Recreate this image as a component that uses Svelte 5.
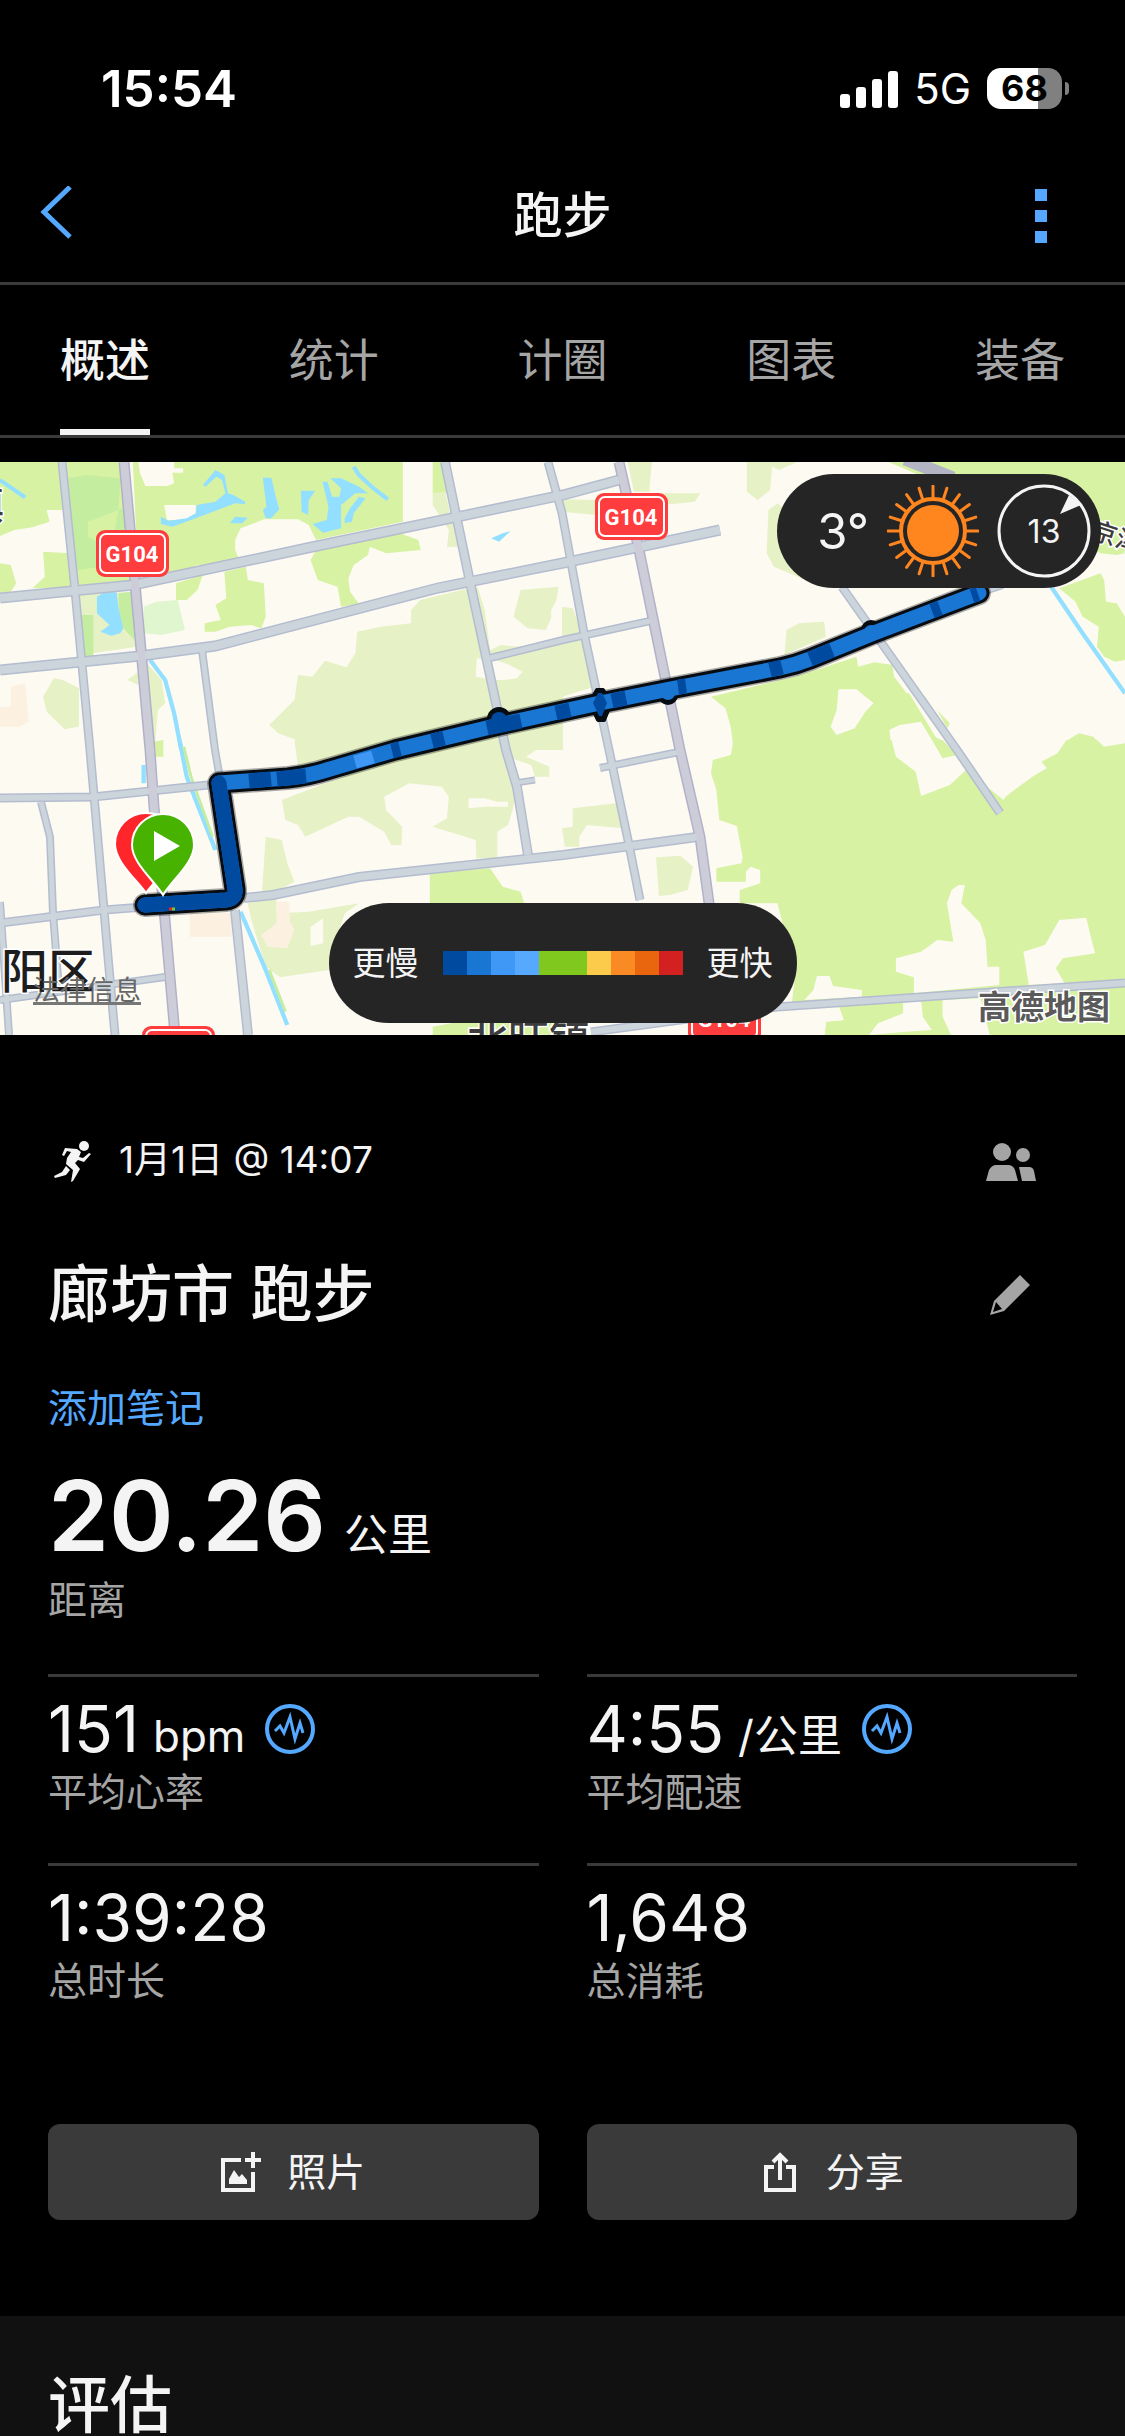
<script>
  const tabs = ['概述', '统计', '计圈', '图表', '装备'];
  let active = $state('概述');

  const paceColors = ['#004ba0', '#1976d2', '#3f98f5', '#56a9ff', '#80c81d', '#80c81d', '#fccb4b', '#fa8b24', '#ea660e', '#d32020'];

  const stats = [
    { value: '151', unit: 'bpm', label: '平均心率', chart: true },
    { value: '4:55', unit: '/公里', label: '平均配速', chart: true },
    { value: '1:39:28', unit: '', label: '总时长', chart: false },
    { value: '1,648', unit: '', label: '总消耗', chart: false }
  ];

  const rays = Array.from({ length: 20 }, (_, i) => i * 18);

  const roads = [
    { w: 10, d: 'M0 136L133 123L312 85L563 33L619 18' },
    { w: 10, d: 'M0 208L140 194L215 184L438 126L563 101L720 68' },
    { w: 7, d: 'M490 196L563 178L650 159' },
    { w: 8, d: 'M62 0L75 128L90 288L95 345L104 448L108 495L115 573' },
    { w: 7, d: 'M202 188L215 288L219 311' },
    { w: 9, d: 'M235 448L248 573' },
    { w: 9, d: 'M445 0L470 120L506 288L517 325L528 393' },
    { w: 8, d: 'M548 0L562 51L584 171L609 288L628 378L640 438' },
    { w: 8, d: 'M0 336L93 335L208 323' },
    { w: 7, d: 'M41 340L50 375L53 451L59 528' },
    { w: 8, d: 'M0 461L104 448L144 445' },
    { w: 9, d: 'M244 436L273 433L359 415L563 393L697 375' },
    { w: 7, d: 'M0 538L165 515' },
    { w: 7, d: 'M0 440L9 573' },
    { w: 6, d: 'M515 321L535 318' },
    { w: 7, d: 'M600 306L679 290' },
    { w: 8, d: 'M842 125L957 288L1000 351' },
    { w: 8, d: 'M591 570L777 545L1125 521' },
    { w: 5, d: 'M985 130L1003 124' }
  ];
  const highways = ['M124 0L135 121L150 288L154 345L165 458L175 573', 'M619 0L639 88L680 288L700 375L709 441L718 573'];
  const shields = [[96, 68], [595, 31], [142, 564], [688, 533]];

  const route = 'M145 443L226 438Q236 437 235 427L219 321L288 316Q308 314 330 307L395 288L499 263L563 249L600 241L670 227L780 206Q795 203 810 197L874 171L979 131';
</script>

<div class="page">
  <div class="status">
    <span class="time">15:54</span>
    <div class="signals">
      <svg class="bars" viewBox="0 0 58 38" aria-hidden="true">
        <rect x="0" y="24" width="10" height="14" rx="3" />
        <rect x="16" y="17" width="10" height="21" rx="3" />
        <rect x="32" y="9" width="10" height="29" rx="3" />
        <rect x="48" y="1" width="10" height="37" rx="3" />
      </svg>
      <span class="network">5G</span>
      <div class="battery"><span class="level">68</span><span class="tip"></span></div>
    </div>
  </div>

  <header class="nav">
    <button class="icon-button" aria-label="返回">
      <svg width="34" height="60" viewBox="0 0 34 60"><path d="M30 1L4 26L30 51" fill="none" stroke="#54a8ff" stroke-width="5" /></svg>
    </button>
    <h1>跑步</h1>
    <button class="icon-button more" aria-label="更多">
      <svg width="12" height="54" viewBox="0 0 12 54" fill="#54a8ff"><path d="M0 0h12v12H0zM0 21h12v12H0zM0 42h12v12H0z" /></svg>
    </button>
  </header>

  <nav class="tabs">
    {#each tabs as tab}
      <button class:active={active === tab} onclick={() => (active = tab)}>{tab}</button>
    {/each}
  </nav>

  <section class="map" aria-label="路线地图">
    <svg class="canvas" viewBox="0 0 1125 573" preserveAspectRatio="xMidYMid slice">
      <rect width="1125" height="573" fill="#fdfaf2" />

      <!-- north-west land cover -->
      <g transform="translate(0 -12) scale(.35906 .33333)">
        <path class="green" d="M0 36H165L175 180H130L138 215L90 232L40 240L0 258ZM0 340L30 345L45 400L30 425L0 430ZM120 305L195 310L203 412L90 415L125 380ZM185 36H350L380 405L215 410ZM370 36H1122V215L880 270L860 225L830 208H735L670 235L655 270V300L665 325L685 340L570 350L550 345L500 370L385 385ZM490 400L565 375L550 420L520 450H490ZM625 365L685 350L690 390L735 400L740 500L728 535L700 525L640 530L600 545H570V520L615 510L600 465L630 445ZM865 330L880 300L1115 250L1165 270L1172 300L1075 310L1030 290L1025 315L985 345L970 385L975 425L1000 462L950 470L940 410L885 390ZM1205 36H1240L1275 190L1248 130H1205Z" />
        <path class="pale" d="M215 435L370 425L380 590L225 615ZM1205 130L1240 125L1275 290L1245 292L1250 240L1205 165ZM750 825L820 750L830 675L870 680L905 632L965 652L990 610L995 545L1060 530L1145 520V480L1170 450L1305 415L1330 410L1350 480L1365 600L1395 585L1440 590L1568 570V900H830L825 870L775 850ZM1430 500L1450 420L1555 410L1550 450L1535 480V505L1520 540L1470 535ZM120 740L150 685L175 690L220 715V830L180 838L130 785ZM410 640L450 690L460 760L440 780L430 900H410ZM355 690L385 665V705Z" />
        <path class="park" d="M190 85L240 75L335 85L330 180L245 215V260L300 290L290 350L210 360ZM330 180L350 170L360 240L320 240ZM330 430L370 425L375 570L330 520ZM220 495H260V620H228Z" />
        <path fill="#dff6cf" d="M400 470L435 455L495 450L515 540L450 555L400 550Z" />
        <path class="peach" d="M0 770H30V710L70 700L80 815L55 830H0Z" />
        <path class="blank" d="M385 36H485V55H510V68H480L485 100L465 108H405L390 70ZM457 165H545V190L520 210H465ZM1328 625L1380 630L1420 645L1455 665L1440 685L1405 690H1375L1325 680Z" />
        <path class="water" d="M565 105L600 60L625 75L635 130L650 135L683 155V163L655 160L545 205L480 230L448 222V200L470 212L520 205L545 190L548 165L600 155L628 130L618 90L603 80L572 110ZM732 83H756L768 140L778 178L755 205H740L732 180L742 170ZM838 122H878L860 150L858 195L840 185ZM898 95H912L925 140H945L950 115L920 85H950L1000 110L1025 130L990 130L950 165V235L900 248L870 222L910 210L915 170ZM1000 140L1018 145L985 190L980 215L960 220V205L975 175ZM640 220L655 200L690 203L675 220ZM270 440L290 427H325L330 475L343 535L335 550L310 557L280 545L305 525L270 490ZM1368 265L1400 250L1422 243L1390 275Z" />
        <path class="stream" d="M985 50L1000 75L1040 115L1080 148M0 90L70 142M418 630L460 690L485 790L505 900" />
      </g>

      <!-- north-east land cover -->
      <g transform="translate(562 -12) scale(.35906 .33333)">
        <path class="pale" d="M183 36H250L243 125H200ZM240 130H385L370 155L300 163H220ZM515 36H655L605 60L585 50L580 120L545 150L515 125ZM600 160L575 180L570 310L590 350L700 400L760 412L650 200ZM625 540L660 520L730 515L735 560L620 615ZM0 148L95 150V195L0 185ZM0 470L30 475L60 560L90 710L0 740Z" />
        <path class="green" d="M910 36H1568V310L1545 315L1500 310ZM1385 415L1500 370L1510 390L1515 455L1545 460L1568 500V630L1540 635L1510 620L1490 590L1495 530L1450 500L1430 455ZM415 740L650 680L820 620L825 650L870 637L920 645L925 680L960 730L1000 730L1080 820L1070 840L1110 900H478L470 830L455 775ZM1385 885L1440 850L1480 860L1500 885H1568V905H1400Z" />
        <path class="blank" d="M770 718H820L868 760L845 785L815 835L765 855L748 830L765 780ZM912 840L940 825L1000 815L1030 870L1060 900H918ZM925 675L990 725L1040 770L1075 840L1100 900L1040 860L970 735Z" />
        <path class="stream" d="M1362 410L1450 550L1568 730" />
      </g>

      <!-- south-west land cover -->
      <g transform="translate(0 278) scale(.35906 .33333)">
        <path class="pale" d="M820 0H1100L830 80ZM785 180L1100 50L1395 0L1440 130L1430 200L1415 255L1385 275V355H1327L1325 300L1205 260L1245 235L1250 170L1230 140L1140 130L1070 170L1075 210L1120 260L1118 315H1090L1070 275L1000 230H970L850 290L830 255L795 240ZM1400 0H1568V20L1500 25L1465 50L1530 80V110H1490L1480 75L1410 50ZM740 290L785 300L800 370L820 425L740 470L730 450ZM690 490L770 470V520L860 515L1000 490L960 520L920 650L915 690L780 712L740 680L700 540Z" />
        <path class="peach" d="M770 485H805L808 545L820 570L800 625L745 620L728 585L770 550ZM528 520H645V590H528Z" />
        <path class="blank" d="M865 560L900 535V610L865 618ZM1305 175H1350L1385 185H1415V200H1350L1305 205Z" />
        <path class="green" d="M1197 400L1365 385L1400 440L1450 455L1460 490H1197ZM1205 860L1280 845H1568V900H1205ZM430 5L455 0V50H435Z" />
        <path class="stream" d="M500 0L520 110L545 180L600 330M670 515L740 690L800 855M400 75V130" />
        <path fill="none" stroke="#c4eda0" stroke-width="8" d="M512 20L532 110L592 290M750 690L795 815" />
      </g>

      <!-- south-east land cover -->
      <g transform="translate(562 278) scale(.35906 .33333)">
        <path class="green" d="M478 0L470 45L420 60L415 100L430 150L438 240L487 258L503 350L500 370L430 385V425H512V395L525 380L552 390V430L495 450V490H600L650 700L640 790L785 840L735 845L730 900H1568V0Z" />
        <path class="pale" d="M30 205L150 190L180 215L170 265L70 255L48 290V320H8L0 265L30 260ZM262 352L330 347L365 380L350 450L300 465L270 468Z" />
        <path class="blank" d="M918 0L930 50L985 95L1000 168L1080 135L1125 90L1230 180L1235 170L1310 110L1350 85L1335 65L1380 40L1405 0ZM1490 0H1568V10L1510 20ZM1105 435H1122L1112 490L1165 550L1180 600L1185 680H1218V735L980 760V712L930 695V655L1000 635L1045 600L1090 605L1080 540L1072 490L1085 450ZM1385 540L1460 533L1475 600L1485 640L1395 655L1375 685L1400 730L1300 735L1285 635L1345 615ZM675 780L700 750L710 708H745L755 738L835 750V770ZM610 810L770 795L785 840L735 845L730 900H480ZM950 785L1000 780L1005 830L1030 870L960 875L855 885L880 850L950 820ZM1060 780L1165 775L1195 900H1090L1060 830Z" />
        <path class="green" d="M1030 0H1060L1100 45L1060 55Z" />
      </g>

      <g fill="none">
        {#each roads as r}
          <path d={r.d} stroke="#b4bccf" stroke-width={r.w + 1} />
        {/each}
        {#each highways as d}
          <path {d} stroke="#b1b1c8" stroke-width="11" />
        {/each}
        {#each roads as r}
          <path d={r.d} stroke="#ccd5db" stroke-width={r.w - 2} />
        {/each}
        {#each highways as d}
          <path {d} stroke="#cdcdda" stroke-width="8" />
        {/each}
        <path d="M905 -3L953 16" stroke="#b3b4c4" stroke-width="13" />
      </g>

      {#each shields as [x, y]}
        <g transform="translate({x} {y})">
          <rect width="73" height="47" rx="9" fill="#ff3c3e" />
          <rect x="4" y="4" width="65" height="39" rx="6" fill="none" stroke="#fff" stroke-width="2" />
          <text class="shield" x="36" y="32" text-anchor="middle">G104</text>
        </g>
      {/each}

      <g class="place">
        <text x="-36" y="57" font-size="40">镇</text>
        <text x="1" y="526" font-size="47" fill="#1d1d1d">阳区</text>
        <text x="467" y="592" font-size="41">北旺镇</text>
        <text x="1090" y="76" font-size="25" transform="rotate(18 1090 76)">京津</text>
        <text x="978" y="557" font-size="33" font-weight="700" fill="#5a5a5a">高德地图</text>
      </g>

      <g fill="none" stroke-linejoin="round" stroke-linecap="round">
        <path d={route} stroke="#111" stroke-opacity=".35" stroke-width="24" />
        <path d={route} stroke="#070b12" stroke-width="21" />
        <g fill="#070b12" stroke="#070b12" stroke-width="4">
          <circle cx="499" cy="257" r="10" />
          <path d="M590 241L597 228H603L611 241L604 258H598Z" />
          <circle cx="668" cy="233" r="8" />
          <circle cx="871" cy="168" r="8" />
        </g>
        <path d={route} stroke="#1976d2" stroke-width="15" />
        <g stroke="#004ba0" stroke-width="15">
          <path d="M145 443L226 438Q236 437 235 427L219 321" />
          <path stroke-linecap="butt" d="M249 319L271 317M277 317L306 314M392 289L400 287M432 279L444 276M487 266L521 259M556 251L570 248M612 239L626 236M678 225L686 224M770 208L782 205M810 197L832 188M932 149L940 146M972 134L978 132" />
        </g>
        <path stroke="#3f98f5" stroke-width="13" stroke-linecap="butt" d="M355 300L373 295" />
        <circle cx="499" cy="258" r="8" fill="#004ba0" />
        <path d="M593 241L598 231H602L607 241L602 254H599Z" fill="#004ba0" />
        <circle cx="668" cy="231" r="7" fill="#1976d2" />
        <circle cx="871" cy="170" r="7" fill="#1976d2" />
      </g>
      <path d="M169 447h3" stroke="#e32525" stroke-width="3" />
      <path d="M172 447h3" stroke="#80c81d" stroke-width="3" />

      <g stroke="#fff" stroke-width="2">
        <path fill="#ff262b" d="M146 431C137 418 115 400 115 382A31 31 0 0 1 177 382C177 400 155 418 146 431Z" />
        <path fill="#48b200" d="M163 433C154 418 132 401 132 383A31 31 0 0 1 194 383C194 401 172 418 163 433Z" />
      </g>
      <path fill="#fff" d="M154 369L180 384L154 399Z" />
    </svg>

    <div class="pill weather">
      <span class="temp">3°</span>
      <svg width="92" height="92" viewBox="-46 -46 92 92" aria-label="晴">
        <circle r="26" fill="#ff861f" />
        <circle r="32" fill="none" stroke="#ff861f" stroke-width="4" />
        {#each rays as a}
          <path d="M0 -34V-45" transform="rotate({a})" stroke="#ff861f" stroke-width="3" stroke-linecap="round" />
        {/each}
      </svg>
      <div class="wind">
        <svg width="94" height="94" viewBox="-47 -47 94 94" aria-hidden="true">
          <circle r="45" fill="none" stroke="#f4f4f4" stroke-width="3" />
          <path fill="#f4f4f4" d="M16 -17L25 -36L37 -26Z" />
        </svg>
        <span>13</span>
      </div>
    </div>

    <div class="pill legend">
      <span>更慢</span>
      <div class="scale">
        {#each paceColors as c}<i style:background={c}></i>{/each}
      </div>
      <span>更快</span>
    </div>

    <a class="legal" href="#legal">法律信息</a>
  </section>

  <main class="summary">
    <div class="row date">
      <svg width="40" height="42" viewBox="0 0 40 42" fill="#f4f4f4" aria-hidden="true">
        <circle cx="31" cy="5" r="5" />
        <path d="M12 7L24 8L28 11L26 16L30 17L36 12L38 13L31 21L25 19L22 22L27 28L20 40L18 41L20 29L13 23L14 17L18 11L14 10L11 15L9 14Z" />
        <path d="M13 25L17 29L13 34L2 37L1 35L9 31Z" />
      </svg>
      <span class="when">1月1日 @ 14:07</span>
      <button class="icon-button" aria-label="参与者">
        <svg width="52" height="40" viewBox="0 0 52 40" fill="#a5a5a5">
          <circle cx="17" cy="10" r="9" /><circle cx="38" cy="13" r="7" />
          <path d="M1 39L4 28Q7 23 11 23H23Q28 23 30 28L33 39ZM34 25H44Q48 25 49 29L51 39H37Z" />
        </svg>
      </button>
    </div>

    <div class="row title">
      <h2>廊坊市 跑步</h2>
      <button class="icon-button" aria-label="编辑">
        <svg width="42" height="42" viewBox="0 0 42 42" fill="#a5a5a5">
          <path fill-rule="evenodd" d="M31 1L41 11L15 37L1 41L5 27ZM7 28L4 38L13 35Z" />
        </svg>
      </button>
    </div>

    <a class="note" href="#note">添加笔记</a>

    <div class="distance"><strong>20.26</strong><span class="unit">公里</span></div>
    <div class="label">距离</div>

    <div class="grid">
      {#each stats as s}
        <div class="stat">
          <div class="value">
            <span>{s.value}</span>
            {#if s.unit}<span class="unit">{s.unit}</span>{/if}
            {#if s.chart}
              <button class="icon-button" aria-label="{s.label}图表">
                <svg width="50" height="50" viewBox="0 0 50 50" fill="none" stroke="#54a8ff">
                  <circle cx="25" cy="25" r="23" stroke-width="4" />
                  <path d="M10 27L15 22L19 29L25 13L30 35L35 19L38 29" stroke-width="3" />
                </svg>
              </button>
            {/if}
          </div>
          <div class="label">{s.label}</div>
        </div>
      {/each}
    </div>

    <div class="actions">
      <button>
        <svg width="40" height="40" viewBox="0 0 40 40" aria-hidden="true">
          <path d="M20 8H2V38H32V20M24 8H40M32 0V16" fill="none" stroke="#f4f4f4" stroke-width="4" />
          <path d="M8 32V27L13 18L18 25L21 22L26 28V32Z" fill="#f4f4f4" />
        </svg>
        <span>照片</span>
      </button>
      <button>
        <svg width="40" height="40" viewBox="0 0 40 40" fill="none" stroke="#f4f4f4" stroke-width="4" aria-hidden="true">
          <path d="M14 15H6V38H34V15H26M20 28V4M13 10L20 3L27 10" />
        </svg>
        <span>分享</span>
      </button>
    </div>
  </main>

  <section class="review"><h2>评估</h2></section>
</div>

<style>
  :global(body) {
    background: #000;
  }
  .page {
    display: flex;
    flex-direction: column;
    min-height: 100vh;
    background: #000;
    color: #f4f4f4;
    font-family: Inter, 'Noto Sans CJK SC', sans-serif;
  }
  h1,
  h2 {
    margin: 0;
    font-weight: 500;
  }
  button {
    padding: 0;
    border: 0;
    background: none;
    color: inherit;
    font: inherit;
    cursor: pointer;
  }
  svg {
    display: block;
    flex: none;
  }
  .icon-button {
    display: flex;
    align-items: center;
  }

  .status {
    display: flex;
    justify-content: space-between;
    align-items: center;
    box-sizing: border-box;
    height: 150px;
    padding: 27px 56px 0 101px;
    color: #fff;
  }
  .time {
    font-size: 51px;
    font-weight: 600;
  }
  .signals {
    display: flex;
    align-items: center;
    gap: 16px;
  }
  .bars {
    width: 58px;
    height: 38px;
    fill: #fff;
  }
  .network {
    font-size: 42px;
  }
  .battery {
    display: flex;
    align-items: center;
    gap: 3px;
  }
  .level {
    width: 75px;
    border-radius: 14px;
    background: linear-gradient(90deg, #fff 68%, #808080 68%);
    color: #000;
    font-size: 36px;
    font-weight: 700;
    line-height: 41px;
    text-align: center;
  }
  .tip {
    width: 4px;
    height: 13px;
    border-radius: 0 4px 4px 0;
    background: #808080;
  }

  .nav {
    display: grid;
    grid-template-columns: 1fr auto 1fr;
    align-items: center;
    height: 132px;
    padding: 0 78px 0 40px;
    border-bottom: 3px solid #3a3a3a;
  }
  .nav {
    padding: 0 40px;
  }
  .nav h1 {
    font-size: 49px;
    line-height: 60px;
  }
  .more {
    justify-self: end;
    padding: 0 38px;
    margin-right: 0;
  }
  .tabs {
    display: flex;
    justify-content: space-between;
    height: 150px;
    padding: 0 60px;
    border-bottom: 3px solid #3a3a3a;
  }
  .tabs button {
    padding-bottom: 6px;
    border-top: 6px solid transparent;
    border-bottom: 6px solid transparent;
    color: #a5a5a5;
    font-size: 45px;
  }
  .tabs .active {
    border-bottom-color: #f4f4f4;
    color: #f4f4f4;
    font-weight: 500;
  }

  .map {
    position: relative;
    height: 573px;
    margin-top: 24px;
    overflow: hidden;
  }
  .canvas {
    width: 100%;
    height: 100%;
  }
  .green {
    fill: #d7f2a3;
  }
  .pale {
    fill: #e6f1c6;
  }
  .park {
    fill: #c4eda0;
  }
  .peach {
    fill: #fcf0e0;
  }
  .blank {
    fill: #fdfaf2;
  }
  .water {
    fill: #93dfff;
  }
  .stream {
    fill: none;
    stroke: #93dfff;
    stroke-width: 12px;
  }
  .shield {
    fill: #fff;
    font-family: Roboto, sans-serif;
    font-size: 22px;
    font-weight: 700;
  }
  .place {
    fill: #3c3c3c;
    font-family: 'Noto Sans CJK SC', sans-serif;
    font-weight: 500;
    paint-order: stroke;
    stroke: #fff;
    stroke-width: 3px;
  }
  .pill {
    position: absolute;
    display: flex;
    align-items: center;
    box-sizing: border-box;
    border-radius: 60px;
    background: #252525;
  }
  .weather {
    top: 12px;
    right: 24px;
    height: 114px;
    padding: 0 10px 0 40px;
    gap: 18px;
  }
  .temp {
    font-size: 49px;
  }
  .wind {
    display: grid;
    place-items: center;
  }
  .wind > * {
    grid-area: 1 / 1;
  }
  .wind span {
    font-size: 32px;
  }
  .legend {
    bottom: 12px;
    left: 50%;
    height: 120px;
    padding: 0 24px;
    gap: 24px;
    transform: translateX(-50%);
    font-size: 33px;
    line-height: 36px;
    white-space: nowrap;
  }
  .scale {
    display: flex;
  }
  .scale i {
    width: 24px;
    height: 24px;
  }
  .legal {
    position: absolute;
    bottom: 30px;
    left: 33px;
    border-bottom: 3px solid #777;
    color: #666;
    font-size: 27px;
    line-height: 22px;
    text-decoration: none;
  }

  .summary {
    display: flex;
    flex-direction: column;
    padding: 97px 48px 96px;
  }
  .row {
    display: flex;
    align-items: center;
    padding-right: 40px;
  }
  .date {
    height: 60px;
    padding-left: 5px;
    gap: 26px;
    font-size: 37px;
    line-height: 60px;
  }
  .when {
    flex: 1;
    height: 64px;
  }
  .title {
    justify-content: space-between;
    height: 74px;
    margin-top: 66px;
    padding-right: 46px;
  }
  h2 {
    font-size: 62px;
    line-height: 74px;
  }
  .note {
    align-self: flex-start;
    margin-top: 49px;
    color: #54a8ff;
    font-size: 39px;
    line-height: 54px;
    text-decoration: none;
  }
  .distance {
    display: flex;
    align-items: baseline;
    gap: 18px;
    height: 120px;
    margin-top: 21px;
    line-height: 120px;
  }
  .distance strong {
    font-size: 98px;
    font-weight: 600;
  }
  .unit {
    font-size: 44px;
  }
  .label {
    color: #a5a5a5;
    font-size: 39px;
    line-height: 48px;
  }
  .grid,
  .actions {
    display: grid;
    grid-template-columns: 1fr 1fr;
    column-gap: 48px;
  }
  .grid {
    row-gap: 47px;
    margin-top: 50px;
  }
  .stat {
    padding-top: 13px;
    border-top: 3px solid #3a3a3a;
  }
  .value {
    display: flex;
    align-items: baseline;
    gap: 14px;
    height: 78px;
    font-size: 64px;
    line-height: 78px;
  }
  .value .icon-button {
    align-self: center;
    margin-left: 6px;
  }
  .actions {
    margin-top: 119px;
  }
  .actions button {
    display: flex;
    justify-content: center;
    align-items: center;
    gap: 26px;
    height: 96px;
    border-radius: 12px;
    background: #3a3a3a;
    font-size: 39px;
    line-height: 48px;
  }

  .review {
    flex: 1;
    padding: 60px 48px 0;
    background: #111;
  }
  .review h2 {
    line-height: 60px;
  }
</style>
